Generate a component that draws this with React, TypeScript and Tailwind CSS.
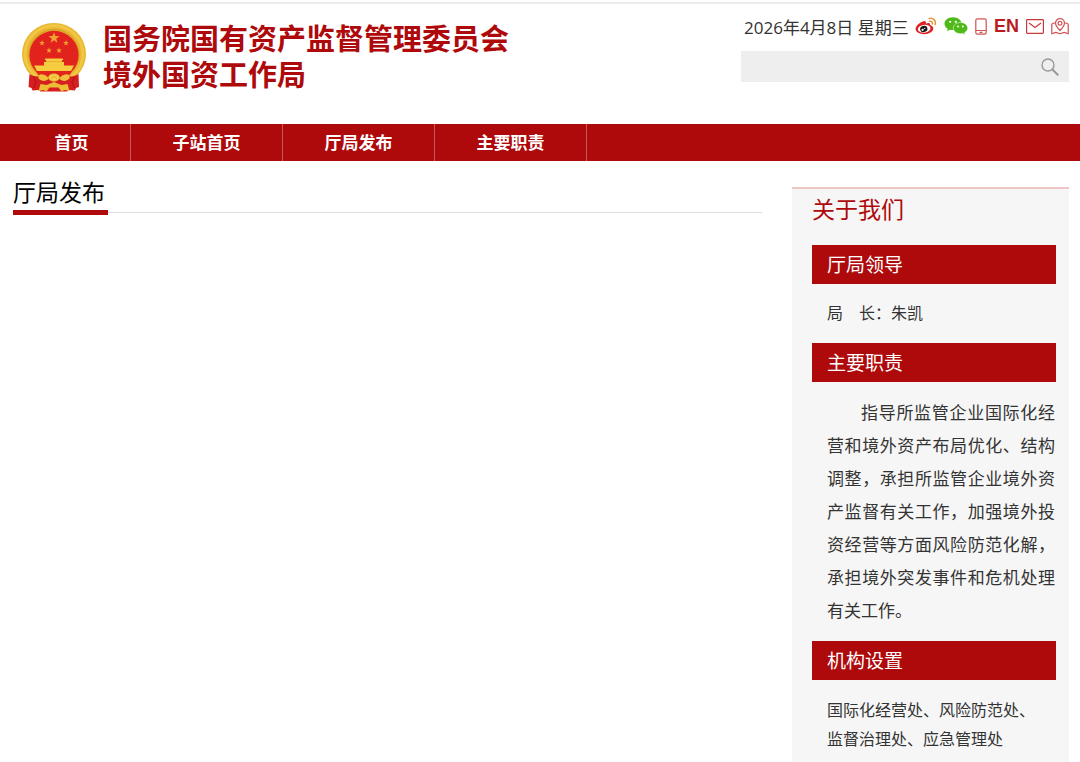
import React from "react";

const navItems = ["子站首页", "厅局发布", "主要职责"];

function starPoints(cx: number, cy: number, r: number) {
  return Array.from({ length: 10 }, (_, i) => {
    const a = (Math.PI / 5) * i - Math.PI / 2;
    const d = i % 2 === 0 ? r : r * 0.4;
    return `${(cx + d * Math.cos(a)).toFixed(2)},${(cy + d * Math.sin(a)).toFixed(2)}`;
  }).join(" ");
}

function Emblem() {
  const stars = [
    [32, 15, 5.8],
    [20, 20, 3],
    [44, 20, 3],
    [27, 27.5, 3],
    [37, 27.5, 3],
  ];
  return (
    <svg viewBox="0 0 64 69" className="h-[69px] w-16 shrink-0" role="img" aria-label="国徽">
      <ellipse cx="32" cy="31" rx="32" ry="31" fill="#e9b62f" />
      <ellipse cx="32" cy="31" rx="29" ry="28.200" fill="none" stroke="#f0c644" strokeWidth="3" />
      <ellipse cx="32" cy="31.500" rx="25" ry="24.800" fill="none" stroke="#d39a26" strokeWidth="1" />
      <ellipse cx="32" cy="32" rx="24.600" ry="24.200" fill="#e2231d" />
      {stars.map(([x, y, r]) => (
        <polygon key={`${x}-${y}`} points={starPoints(x, y, r)} fill="#efa433" />
      ))}
      <path d="M23.500 35.500h17l1 1.600h-1.500v2h2V43H22v-3.900h2v-2h-1.500z" fill="#f6cd40" />
      <path d="M24 38.600h16" stroke="#dc9a20" strokeWidth=".6" />
      <path d="M12 42.500h40l-3 5.500H15z" fill="#f6cd40" />
      <path d="M14 48h36l-5 9H19z" fill="#e2231d" />
      <path d="M7.500 51c3 2 7 3 11 2l8 4h11l8-4c4 1 8 0 11-2l.5 13-3 1-1 2.500-6-.5-2 1.500H18.500l-2-1.500-6 .5-1-2.500-3-1z" fill="#d61e20" />
      <path d="M11.500 54l2.500 5-2.500 6M52.500 54L50 59l2.500 6" stroke="#b51417" fill="none" strokeWidth="1.200" />
      <path d="M18.500 61l6 1 7.500-3 7.500 3 6-1 2 7-5-1-3 1.500-3-4h-9l-3 4-3-1.500-5 1z" fill="#eebb35" />
      <path d="M16.500 52c5-2 8 1 10.500 3.500-3 3-7 3.500-10.500 0zM47.500 52c-5-2-8 1-10.500 3.500 3 3 7 3.500 10.500 0z" fill="#f0c03a" />
      <ellipse cx="32" cy="54.500" rx="5.600" ry="3.800" fill="#f5cf4a" stroke="#d9991f" strokeWidth=".8" />
      <path d="M29 55.500l3-2 3 2" fill="none" stroke="#d9991f" strokeWidth=".8" />
    </svg>
  );
}

function WeiboIcon() {
  return (
    <svg viewBox="0 0 22 18" className="h-[18px] w-[22px]" aria-hidden="true">
      <path d="M8.700 4.200c1.700-.4 2.600.5 2.200 2.300 2.500-1 4.600-.7 4.200 1.600 2.100.7 3.200 2 3.200 3.500 0 3-4 5.600-8.900 5.600S.6 15 .6 12c0-3.300 4.500-7.100 8.100-7.800z" fill="#dd2226" />
      <ellipse cx="9.200" cy="11.800" rx="6.300" ry="3.900" fill="#fff" transform="rotate(-7 9.200 11.800)" />
      <ellipse cx="8.800" cy="12" rx="3.700" ry="3.100" fill="#1d1716" transform="rotate(-15 8.800 12)" />
      <circle cx="7.600" cy="12.800" r="1.100" fill="#fff" />
      <circle cx="9.700" cy="11.400" r=".6" fill="#fff" />
      <path d="M14.200 1.400c4-.9 7 2.100 6 6M14.400 4.200c2-.3 3.400 1 3 2.800" fill="none" stroke="#e8923c" strokeWidth="1.500" strokeLinecap="round" />
    </svg>
  );
}

function WechatIcon() {
  return (
    <svg viewBox="0 0 24 18" className="h-[18px] w-6" aria-hidden="true">
      <path d="M9 .2C4.200.2.500 3.100.500 6.700c0 2.100 1.200 3.900 3.200 5.100L3 14.200l2.900-1.500c1 .3 2 .4 3.100.4 4.700 0 8.500-2.800 8.500-6.400S13.700.2 9 .2z" fill="#4fb917" />
      <path d="M16.500 5.500c-4 0-7.200 2.500-7.200 5.600s3.200 5.600 7.200 5.600c.8 0 1.600-.1 2.300-.3l2.400 1.400-.6-2.200c1.900-1 3.100-2.700 3.100-4.500 0-3.100-3.200-5.600-7.200-5.600z" fill="#4fb917" stroke="#fff" strokeWidth=".5" />
      <g fill="#fff">
        <circle cx="6.200" cy="4.800" r="1.100" />
        <circle cx="11.800" cy="4.800" r="1.100" />
        <circle cx="14" cy="9.600" r="1" />
        <circle cx="18.800" cy="9.600" r="1" />
      </g>
    </svg>
  );
}

function PhoneIcon() {
  return (
    <svg viewBox="0 0 12 17" className="h-[17px] w-3" fill="none" stroke="#d05254" strokeWidth="1.200" aria-hidden="true">
      <rect x=".8" y=".8" width="10.400" height="15.400" rx="1.600" />
      <path d="M1 12.500h10M4.500 14.400h3" />
    </svg>
  );
}

function MailIcon() {
  return (
    <svg viewBox="0 0 18 15" className="h-[15px] w-[18px]" fill="none" stroke="#c93a3d" strokeWidth="1.200" aria-hidden="true">
      <rect x=".6" y=".6" width="16.800" height="13.800" rx=".8" />
      <path d="M3 4l6 4.600L15 4" />
    </svg>
  );
}

function MapIcon() {
  return (
    <svg viewBox="0 0 18 17" className="h-[17px] w-[18px]" fill="none" stroke="#d05254" strokeWidth="1.200" strokeLinejoin="round" aria-hidden="true">
      <path d="M9 12.500C6.200 9.500 4.500 7.600 4.500 5.200a4.500 4.500 0 0 1 9 0c0 2.400-1.700 4.300-4.500 7.300z" />
      <circle cx="9" cy="5.200" r="1.900" />
      <path d="M3.800 4.800L.8 6v9.800l4-1.400 4.200 1.400 4.200-1.400 4 1.400V6l-3-1.200" />
    </svg>
  );
}

function SearchIcon() {
  return (
    <svg viewBox="0 0 18 18" className="h-[18px] w-[18px]" fill="none" stroke="#999" aria-hidden="true">
      <circle cx="7" cy="7" r="6" strokeWidth="1.400" />
      <path d="M11.500 11.500l5.200 5.200" strokeWidth="2" strokeLinecap="round" />
    </svg>
  );
}

function BarTitle({ children }: { children: React.ReactNode }) {
  return <h3 className="bg-[#ae090b] px-[15px] pt-px text-[19px] leading-[38px] text-white">{children}</h3>;
}

export default function App() {
  return (
    <div
      lang="zh-CN"
      className="flex min-h-screen flex-col border-t-2 border-white bg-white font-['Open_Sans','Noto_Sans_CJK_SC',sans-serif] text-[#333]"
    >
      <header className="flex items-start justify-between border-t-2 border-[#ebebeb] pb-[31px] pr-[11px] pl-[22px]">
        <div className="flex items-start gap-[17px] pt-[17px]">
          <div className="pt-[2px]">
            <Emblem />
          </div>
          <h1 className="text-[29px] leading-9 font-bold text-[#ae090b]">
            国务院国有资产监督管理委员会
            <br />
            境外国资工作局
          </h1>
        </div>
        <div className="flex w-[328px] flex-col gap-[9px] pt-[10px]">
          <div className="flex items-center justify-between pl-[3px]">
            <time dateTime="2026-04-08" className="text-[17px] leading-7 whitespace-nowrap">
              2026年4月8日 星期三
            </time>
            <div className="flex items-center gap-[7px] pb-1">
              <a href="#weibo" aria-label="微博"><WeiboIcon /></a>
              <a href="#wechat" aria-label="微信"><WechatIcon /></a>
              <a href="#mobile" aria-label="手机版"><PhoneIcon /></a>
              <a href="#en" className="font-['Liberation_Sans',sans-serif] text-lg leading-4 font-bold text-[#b91c20]">EN</a>
              <a href="#mail" aria-label="邮箱"><MailIcon /></a>
              <a href="#map" aria-label="地图"><MapIcon /></a>
            </div>
          </div>
          <form className="flex h-[31px] items-center bg-[#eee] pr-[10px]" onSubmit={(e) => e.preventDefault()}>
            <input type="text" aria-label="搜索" className="h-full min-w-0 flex-1 bg-transparent px-2 text-sm outline-none" />
            <button type="submit" aria-label="搜索"><SearchIcon /></button>
          </form>
        </div>
      </header>

      <nav className="flex bg-[#ae090b] pl-[13px] text-center text-[17px] leading-[37px] font-bold text-white">
        <a href="#home" className="w-[118px] border-r border-[#c9595b]">首页</a>
        {navItems.map((t) => (
          <a key={t} href={`#${t}`} className="w-[152px] border-r border-[#c9595b]">{t}</a>
        ))}
      </nav>

      <main className="flex flex-1 gap-[30px] pr-[11px] pl-[13px]">
        <section className="min-w-0 flex-1 pt-[14px]">
          <div className="flex items-end">
            <h2 className="border-b-5 border-[#ae090b] pr-[3px] text-[23px] leading-[35px] text-black">厅局发布</h2>
            <div className="mb-0.5 flex-1 border-b border-[#ddd]" />
          </div>
        </section>

        <aside className="mt-[26px] w-[277px] border-t-2 border-[#efc6c6] bg-[#f6f6f6] pr-[13px] pl-5">
          <h2 className="pb-4 text-[23px] leading-10 text-[#ae090b]">关于我们</h2>
          <BarTitle>厅局领导</BarTitle>
          <p className="px-[15px] pt-[15px] pb-4 text-[16px] leading-7 whitespace-pre">{"局\u2003长：朱凯"}</p>
          <BarTitle>主要职责</BarTitle>
          <p className="my-[14px] pr-px pl-[15px] indent-[2em] text-[17px] leading-[33px] text-justify">
            指导所监管企业国际化经营和境外资产布局优化、结构调整，承担所监管企业境外资产监督有关工作，加强境外投资经营等方面风险防范化解，承担境外突发事件和危机处理有关工作。
          </p>
          <BarTitle>机构设置</BarTitle>
          <p className="pt-4 pl-[15px] text-[16px] leading-[29px]">
            国际化经营处、风险防范处、
            <br />
            监督治理处、应急管理处
          </p>
        </aside>
      </main>
    </div>
  );
}
